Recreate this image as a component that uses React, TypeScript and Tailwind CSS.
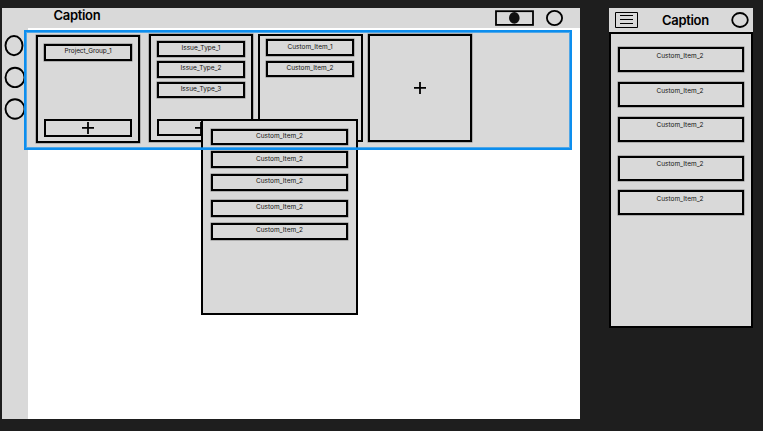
import type { ReactNode } from "react";

function Box({ className = "", children }: { className?: string; children?: ReactNode }) {
  return (
    <div className={`shrink-0 border-2 border-black bg-[#d9d9d9] ${className}`}>
      {children}
    </div>
  );
}

function Item({ label, className }: { label: string; className: string }) {
  return (
    <Box className={`flex w-full justify-center text-[6.5px] text-[#111] shadow-[0_0_0_0.5px_#00000066] ${className}`}>
      <span>{label}</span>
    </Box>
  );
}

function Plus() {
  return (
    <svg viewBox="0 0 12 12" className="size-3" stroke="#000" strokeWidth="1.8">
      <path d="M0 5.9H12M6 0V12" />
    </svg>
  );
}

export default function App() {
  return (
    <div className="flex h-[431px] w-[763px] items-start overflow-hidden bg-[#1e1e1e] pl-0.5 pt-2 font-['Inter',sans-serif]">
      <main className="relative flex h-[411px] w-[578px] shrink-0 flex-col bg-white">
        <header className="flex h-5 shrink-0 items-start bg-[#d9d9d9] pl-[51.5px]">
          <h1 className="text-[13px] font-semibold leading-[15px] tracking-[-0.32px]">Caption</h1>
          <svg viewBox="0 0 90 20" className="ml-auto h-5 w-[90px]" fill="none" stroke="#000" strokeWidth="1.8">
            <rect x="6" y="3.2" width="37" height="13.7" />
            <ellipse cx="24.3" cy="9.9" rx="5.3" ry="5.8" fill="#111" stroke="none" />
            <ellipse cx="64.5" cy="10" rx="7.6" ry="7.1" />
          </svg>
        </header>
        <div className="flex min-h-0 flex-1">
          <aside className="w-[26px] shrink-0 bg-[#d9d9d9]">
            <svg viewBox="0 0 26 96" className="h-24 w-[26px]" fill="none" stroke="#000" strokeWidth="1.9">
              <ellipse cx="12" cy="17.6" rx="8.5" ry="9.6" />
              <ellipse cx="13" cy="49.4" rx="9.5" ry="9.7" />
              <ellipse cx="13" cy="81" rx="9.5" ry="9.7" />
            </svg>
          </aside>
          <section className="-ml-1 mt-0.5 h-[120px] w-[548px] shrink-0 bg-[#d9d9d9]">
            <div className="flex items-start pl-3 pt-1">
              <Box className="mt-px flex h-[108px] w-[104px] flex-col px-1.5 pt-[7px] shadow-[0_0_0_0.5px_#00000066]">
                <Item label="Project_Group_1" className="h-[17px] leading-[11px] tracking-[-0.07px]" />
                <Box className="mt-[58px] flex h-[18px] items-center justify-center">
                  <Plus />
                </Box>
              </Box>
              <Box className="ml-[9px] flex h-[108px] w-[104px] flex-col px-1.5 pt-[5px] shadow-[0_0_0_0.5px_#00000066]">
                <Item label="Issue_Type_1" className="h-4 leading-[11px]" />
                <Item label="Issue_Type_2" className="mt-1 h-[17px] leading-[11px]" />
                <Item label="Issue_Type_3" className="mt-1 h-4 leading-[11px]" />
                <Box className="mt-[21px] flex h-[17px] items-center justify-center">
                  <Plus />
                </Box>
              </Box>
              <Box className="ml-[5px] flex h-[108px] w-[105px] flex-col pl-1.5 pr-[7px] pt-[3px]">
                <Item label="Custom_Item_1" className="h-[17px] leading-[12px]" />
                <Item label="Custom_Item_2" className="mt-[5px] h-4 leading-[11px]" />
              </Box>
              <Box className="ml-[5px] flex h-[108px] w-[104px] items-center justify-center shadow-[0_0_0_0.5px_#00000066]">
                <Plus />
              </Box>
            </div>
          </section>
        </div>
        <Box className="absolute left-[199px] top-[111px] h-[196px] w-[157px] px-2 pt-2">
          <Item label="Custom_Item_2" className="h-4 leading-[10px]" />
          <Item label="Custom_Item_2" className="mt-1.5 h-[17px] leading-[12px]" />
          <Item label="Custom_Item_2" className="mt-1.5 h-[17px] leading-[11px]" />
          <Item label="Custom_Item_2" className="mt-[9px] h-[17px] leading-[11px]" />
          <Item label="Custom_Item_2" className="mt-1.5 h-[17px] leading-[11px]" />
        </Box>
        <div className="absolute left-[22px] top-[22px] h-[120px] w-[548px] border-2 border-[#0d8eee] shadow-[inset_0_0_0_1px_#0d8eeeaa]" />
      </main>

      <aside className="ml-[29px] w-36 shrink-0 bg-[#d9d9d9]">
        <header className="flex h-6 items-center pl-1.5 pr-1">
          <svg viewBox="0 0 23 16" className="h-4 w-[23px]" fill="none" stroke="#000">
            <path d="M.5 .5H22.5V15.5H.5ZM5 3.5H18M5 7.5H18M5 11.5H18" />
          </svg>
          <h2 className="ml-6 text-[13px] font-semibold leading-4 tracking-[-0.32px]">Caption</h2>
          <svg viewBox="0 0 18 16" className="ml-auto h-4 w-[18px]" fill="none" stroke="#000" strokeWidth="1.8">
            <ellipse cx="9" cy="8" rx="7.8" ry="7" />
          </svg>
        </header>
        <Box className="h-[296px] pl-[7px] pr-[7px] pt-[13px]">
          <Item label="Custom_Item_2" className="h-[25px] pr-0.5 leading-[14px]" />
          <Item label="Custom_Item_2" className="mt-2.5 h-[25px] pr-0.5 leading-[14px]" />
          <Item label="Custom_Item_2" className="mt-2.5 h-[25px] pr-0.5 leading-[13px]" />
          <Item label="Custom_Item_2" className="mt-3.5 h-[25px] pr-0.5 leading-[13px]" />
          <Item label="Custom_Item_2" className="mt-[9px] h-[25px] pr-0.5 leading-[14px]" />
        </Box>
      </aside>
    </div>
  );
}
